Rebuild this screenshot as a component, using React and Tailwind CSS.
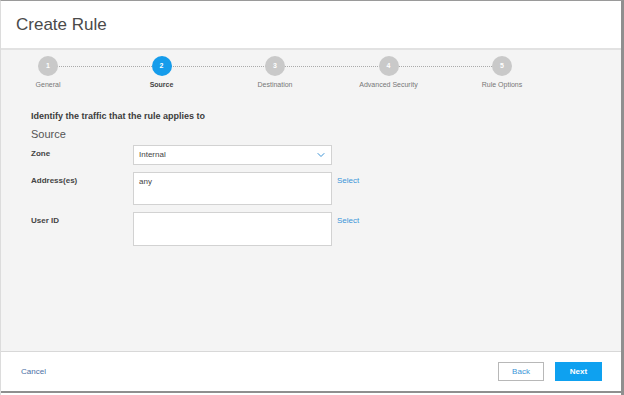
import { ChevronDown } from "lucide-react";

const steps = [
  { n: 1, label: "General" },
  { n: 2, label: "Source", active: true },
  { n: 3, label: "Destination" },
  { n: 4, label: "Advanced Security" },
  { n: 5, label: "Rule Options" },
];

function Stepper() {
  return (
    <div className="relative -ml-[1px] flex gap-[17.5px] pt-[6px]">
      {/* dotted connector behind the circles */}
      <div className="absolute left-[48px] w-[454px] top-[16px] border-t border-dotted border-[#aaaaaa]" />
      {steps.map((s) => (
        <div key={s.n} className="relative z-10 flex w-[96px] flex-col items-center">
          <div
            className={`flex h-[20px] w-[20px] items-center justify-center rounded-full text-[7px] font-bold text-white ${
              s.active ? "bg-[#159ceb]" : "bg-[#c9c9c9]"
            }`}
          >
            {s.n}
          </div>
          <div
            className={`mt-[4px] text-[7px] leading-[9px] ${
              s.active ? "font-bold text-[#444]" : "text-[#777]"
            }`}
          >
            {s.label}
          </div>
        </div>
      ))}
    </div>
  );
}

export default function App() {
  return (
    <div
      className="flex h-[395px] w-[624px] flex-col border-t border-l border-r-[3px] border-t-[#9a9a9a] border-l-[#dcdcdc] border-r-[#8f8f8f] bg-white"
      style={{ fontFamily: '"Liberation Sans", Arial, sans-serif' }}
    >
      {/* Header */}
      <div className="flex h-[49px] items-center border-b-2 border-[#e2e2e2] pl-[15px]">
        <h1 className="text-[17px] text-[#4a4a4a]">Create Rule</h1>
      </div>

      {/* Body */}
      <div className="flex-1 bg-[#f4f4f4]">
        <Stepper />

        <div className="pl-[30px] pt-[21px]">
          <div className="text-[9px] font-bold leading-[12px] text-[#3c3c3c]">
            Identify the traffic that the rule applies to
          </div>
          <div className="mt-[5px] text-[11px] leading-[14px] text-[#555]">Source</div>

          <div className="mt-[4px] grid grid-cols-[102px_199px_auto] items-start gap-y-[7px]">
            <div className="pt-[3px] text-[8px] font-bold text-[#444]">Zone</div>
            <div className="flex h-[20px] items-center justify-between border border-[#d2d2d2] bg-white pl-[5px] pr-[4px]">
              <span className="text-[8px] text-[#444]">Internal</span>
              <ChevronDown className="h-[12px] w-[12px] text-[#3b93d6]" strokeWidth={2} />
            </div>
            <div />

            <div className="pt-[3px] text-[8px] font-bold text-[#444]">Address(es)</div>
            <div className="h-[33px] border border-[#d2d2d2] bg-white pl-[5px] pt-[3px] text-[8px] text-[#444]">
              any
            </div>
            <div className="pl-[5px] pt-[3px] text-[8px] text-[#3a95d8]">Select</div>

            <div className="pt-[3px] text-[8px] font-bold text-[#444]">User ID</div>
            <div className="h-[34px] border border-[#d2d2d2] bg-white" />
            <div className="pl-[5px] pt-[3px] text-[8px] text-[#3a95d8]">Select</div>
          </div>
        </div>
      </div>

      {/* Footer */}
      <div className="flex h-[40px] items-center justify-between border-t border-[#d8d8d8] pl-[20px] pr-[19px]">
        <span className="text-[8px] text-[#4a6fa5]">Cancel</span>
        <div className="flex gap-[11px]">
          <button className="h-[19px] w-[46px] border border-[#b8b8b8] bg-white text-[8px] text-[#3a95d8]">
            Back
          </button>
          <button className="h-[19px] w-[47px] bg-[#0ea1f0] text-[8px] font-bold text-white">
            Next
          </button>
        </div>
      </div>
      <div className="h-[2px] bg-[#8f8f8f]" />
      <div className="h-[2px] bg-white" />
    </div>
  );
}
